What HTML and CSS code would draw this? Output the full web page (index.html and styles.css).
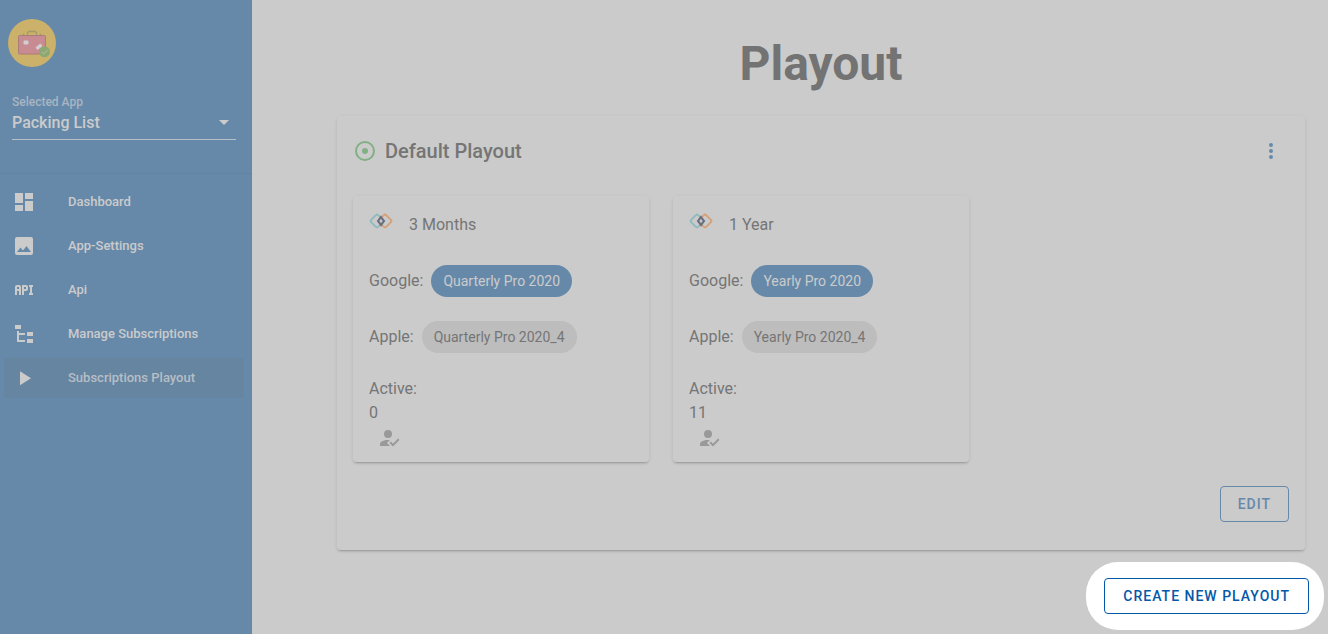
FILE: index.html
```
<!DOCTYPE html>
<html lang="en">

<head>
    <meta charset="utf-8">
    <meta name="viewport" content="width=device-width, initial-scale=1.0">
    <title>Playout</title>
    <link rel="stylesheet" href="styles.css">
</head>

<body>

    <aside class="sidebar">
        <div class="app-select">
            <svg class="logo" viewBox="0 0 48 48" aria-hidden="true">
                <circle cx="24" cy="24" r="24" fill="#cbb169" />
                <path d="M19.500 16v-1.500q0-2 2-2h5q2 0 2 2V16M15.500 16v-1.500M32.500 16v-1.500" fill="none" stroke="#a49c68" stroke-width="1.300" />
                <rect x="10.500" y="16.500" width="27" height="18.500" rx="1" fill="#c98b92" stroke="#ab7d7a" />
                <rect x="15.500" y="21.500" width="5" height="4" rx="1" fill="#d0cfd0" />
                <path d="M28 28.500l4.500-3.500 1.500 2-4.500 3.500z" fill="#d0cfd0" stroke="#d0cfd0" />
                <circle cx="36.500" cy="32.800" r="5.500" fill="#8da873" />
                <path d="M33.800 33l2 1.800 3.500-3.600" fill="none" stroke="#b3bfa0" />
            </svg>
            <label for="app">Selected App</label>
            <div class="select-box">
                <select id="app">
                    <option>Packing List</option>
                </select>
                <svg class="icon" viewBox="0 0 24 24" aria-hidden="true"><path d="M7 10l5 5 5-5z" /></svg>
            </div>
        </div>

        <nav class="menu">
            <a href="#">
                <svg class="icon" viewBox="0 0 24 24" aria-hidden="true"><path d="M13 3v6h8V3m-8 18h8V11h-8M3 21h8v-6H3m0-2h8V3H3v10z" /></svg>
                Dashboard
            </a>
            <a href="#">
                <svg class="icon" viewBox="0 0 24 24" aria-hidden="true"><path d="M8.500 13.500l2.500 3 3.500-4.500 4.500 6H5m16 1V5a2 2 0 0 0-2-2H5a2 2 0 0 0-2 2v14a2 2 0 0 0 2 2h14a2 2 0 0 0 2-2z" /></svg>
                App-Settings
            </a>
            <a href="#">
                <svg class="icon" viewBox="0 0 24 24" aria-hidden="true"><path d="M7 7H5a2 2 0 0 0-2 2v8h2v-4h2v4h2V9a2 2 0 0 0-2-2m0 4H5V9h2m7-2h-4v10h2v-4h2a2 2 0 0 0 2-2V9a2 2 0 0 0-2-2m0 4h-2V9h2m6 0v6h1v2h-4v-2h1V9h-1V7h4v2z" /></svg>
                Api
            </a>
            <a href="#">
                <svg class="icon" viewBox="0 0 24 24" aria-hidden="true"><path d="M3 3h6v4H3V3m12 7h6v4h-6v-4m0 7h6v4h-6v-4m-2-4H7v5h6v2H5V9h2v2h6v2z" /></svg>
                Manage Subscriptions
            </a>
            <a href="#" class="active">
                <svg class="icon" viewBox="0 0 24 24" aria-hidden="true"><path d="M8 5.140v14l11-7-11-7z" /></svg>
                Subscriptions Playout
            </a>
        </nav>
    </aside>

    <main>
        <h1>Playout</h1>

        <section class="card playout">
            <header>
                <svg class="status" viewBox="0 0 24 24" aria-hidden="true">
                    <circle cx="12" cy="12" r="9" />
                    <circle class="dot" cx="12" cy="12" r="3" />
                </svg>
                <h2>Default Playout</h2>
                <button class="more" aria-label="More">
                    <svg class="icon" viewBox="0 0 24 24" aria-hidden="true"><path d="M12 16a2 2 0 1 1 0 4 2 2 0 0 1 0-4m0-6a2 2 0 1 1 0 4 2 2 0 0 1 0-4m0-6a2 2 0 1 1 0 4 2 2 0 0 1 0-4z" /></svg>
                </button>
            </header>

            <div class="plans">
                <article class="card plan">
                    <h3>
                        <svg class="rings" viewBox="0 0 24 16" aria-hidden="true">
                            <rect class="teal" x="3" y="3" width="10" height="10" rx="2" transform="rotate(45 8 8)" />
                            <rect class="orange" x="11" y="3" width="10" height="10" rx="2" transform="rotate(45 16 8)" />
                            <path class="navy" d="M12 4l3 4-3 4-3-4z" />
                        </svg>
                        3 Months
                    </h3>
                    <p class="store">Google: <span class="chip blue">Quarterly Pro 2020</span></p>
                    <p class="store">Apple: <span class="chip">Quarterly Pro 2020_4</span></p>
                    <p>Active:<br>0</p>
                    <svg class="icon user" viewBox="0 0 24 24" aria-hidden="true"><path d="M21.100 12.500l1.400 1.410-6.530 6.590L12.500 17l1.400-1.410 2.070 2.080 5.130-5.170M10 17l3 3H3v-2c0-2.210 3.580-4 8-4l1.890.110L10 17m1-13a4 4 0 1 1 0 8 4 4 0 0 1 0-8z" /></svg>
                </article>

                <article class="card plan">
                    <h3>
                        <svg class="rings" viewBox="0 0 24 16" aria-hidden="true">
                            <rect class="teal" x="3" y="3" width="10" height="10" rx="2" transform="rotate(45 8 8)" />
                            <rect class="orange" x="11" y="3" width="10" height="10" rx="2" transform="rotate(45 16 8)" />
                            <path class="navy" d="M12 4l3 4-3 4-3-4z" />
                        </svg>
                        1 Year
                    </h3>
                    <p class="store">Google: <span class="chip blue">Yearly Pro 2020</span></p>
                    <p class="store">Apple: <span class="chip">Yearly Pro 2020_4</span></p>
                    <p>Active:<br>11</p>
                    <svg class="icon user" viewBox="0 0 24 24" aria-hidden="true"><path d="M21.100 12.500l1.400 1.410-6.530 6.590L12.500 17l1.400-1.410 2.070 2.080 5.130-5.170M10 17l3 3H3v-2c0-2.210 3.580-4 8-4l1.890.110L10 17m1-13a4 4 0 1 1 0 8 4 4 0 0 1 0-8z" /></svg>
                </article>
            </div>

            <div class="actions">
                <button class="btn">Edit</button>
            </div>
        </section>

        <div class="create">
            <div class="spotlight">
                <button class="btn primary">Create new playout</button>
            </div>
        </div>
    </main>

</body>

</html>
```
FILE: styles.css
```
* {
    box-sizing: border-box;
    margin: 0;
    padding: 0;
}

body {
    display: flex;
    min-height: 100vh;
    background: #cbcbcb;
    color: #757575;
    font-family: Roboto, sans-serif;
    font-size: 16px;
    line-height: 24px;
}

button,
select {
    font-family: inherit;
}

.icon {
    width: 24px;
    height: 24px;
    fill: currentColor;
    flex: none;
}

/* sidebar */

.sidebar {
    flex: none;
    width: 252px;
    background: #6689aa;
    color: #cbcbcb;
}

.app-select {
    padding: 19px 16px 33px 12px;
    border-bottom: 1px solid #6284a4;
}

.logo {
    display: block;
    width: 48px;
    height: 48px;
    margin: 0 0 27px -4px;
}

.app-select label {
    display: block;
    font-size: 12px;
    font-weight: 500;
    line-height: 16px;
    color: #a8b5c2;
}

.select-box {
    display: flex;
    align-items: flex-start;
    border-bottom: 1px solid #b5bfc8;
}

.select-box select {
    flex: 1;
    height: 29px;
    padding-bottom: 4px;
    margin-right: -24px;
    border: 0;
    background: transparent;
    appearance: none;
    color: #cbcbcb;
    font-size: 16px;
    font-weight: 500;
}

.select-box .icon {
    pointer-events: none;
}

.menu {
    display: grid;
    gap: 4px;
    padding: 8px 8px 8px 4px;
}

.menu a {
    display: flex;
    align-items: center;
    gap: 32px;
    height: 40px;
    padding: 0 8px;
    border-radius: 4px;
    color: #cbcbcb;
    font-size: 13px;
    font-weight: 500;
    text-decoration: none;
}

.menu .active {
    background: #6685a1;
    color: #b6bec6;
}

.menu .active .icon {
    color: #cbcbcb;
}

/* content */

main {
    flex: 1;
    padding: 32px 23px 4px 85px;
}

h1 {
    margin-bottom: 20px;
    font-size: 48px;
    line-height: 64px;
    text-align: center;
    color: #737373;
}

.card {
    border-radius: 4px;
    background: #cbcbcb;
    box-shadow: 0 3px 1px -2px rgba(0, 0, 0, .12), 0 2px 2px 0 rgba(0, 0, 0, .08), 0 1px 5px 0 rgba(0, 0, 0, .06);
}

.playout {
    padding: 16px 16px 28px;
}

.playout header {
    display: flex;
    align-items: center;
    gap: 8px;
    height: 38px;
    margin-bottom: 26px;
}

.status {
    width: 24px;
    height: 24px;
    fill: none;
    stroke: #82b085;
    stroke-width: 2;
}

.status .dot {
    fill: #82b085;
    stroke: none;
}

h2 {
    font-size: 20px;
    font-weight: 500;
}

.more {
    width: 36px;
    height: 36px;
    margin-left: auto;
    padding-top: 2px;
    border: 0;
    background: none;
    color: #6689aa;
}

.plans {
    display: grid;
    grid-template-columns: repeat(3, 1fr);
    gap: 24px;
    margin-bottom: 24px;
}

.plan {
    padding: 16px 16px 12px;
}

h3 {
    display: flex;
    gap: 16px;
    height: 25px;
    padding-top: 1px;
    margin-bottom: 28px;
    font-size: 16px;
    font-weight: 400;
}

.rings {
    width: 24px;
    height: 16px;
    fill: none;
    stroke-width: 2;
}

.teal {
    stroke: #91bbbd;
}

.orange {
    stroke: #d6a27c;
}

.navy {
    stroke: #666f83;
}

.store {
    display: flex;
    align-items: center;
    gap: 8px;
    height: 32px;
    margin-bottom: 24px;
}

.chip {
    padding: 0 12px;
    border-radius: 16px;
    background: #bdbdbd;
    font-size: 14px;
    line-height: 32px;
}

.chip.blue {
    background: #6689aa;
    color: #cbcbcb;
}

.user {
    display: block;
    margin: 1px 0 0 8px;
    color: #999;
}

.actions,
.create {
    display: flex;
    justify-content: flex-end;
}

.btn {
    height: 36px;
    padding: 0 17px;
    border: 1px solid #6689aa;
    border-radius: 4px;
    background: none;
    color: #6689aa;
    font-size: 14px;
    font-weight: 500;
    letter-spacing: 1px;
    text-transform: uppercase;
}

.create {
    margin: 12px -19px 0 0;
}

.spotlight {
    padding: 16px 15px 16px 18px;
    border-radius: 32px;
    background: #fff;
}

.primary {
    padding: 0 18px;
    border-color: #0558a8;
    color: #0558a8;
}
```
